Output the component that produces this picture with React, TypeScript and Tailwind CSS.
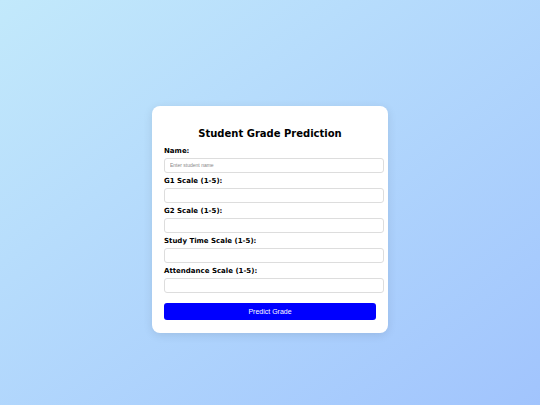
const fields = [
  { id: 'name', label: 'Name:', placeholder: 'Enter student name' },
  { id: 'g1', label: 'G1 Scale (1-5):', placeholder: '' },
  { id: 'g2', label: 'G2 Scale (1-5):', placeholder: '' },
  { id: 'study', label: 'Study Time Scale (1-5):', placeholder: '' },
  { id: 'attendance', label: 'Attendance Scale (1-5):', placeholder: '' },
]

export default function App() {
  return (
    <div className="min-h-[405px] w-full flex items-center justify-center pt-[33px] bg-gradient-to-br from-[#c2e9fb] to-[#a1c4fd] font-['DejaVu_Sans',sans-serif]">
      <div className="w-[236px] bg-white rounded-[8px] px-3 pt-[22px] pb-[12px] shadow-[0_2px_10px_rgba(0,0,0,0.1)]">
        <h2 className="text-center text-[10px] leading-[12px] font-bold text-black mb-[7px]">
          Student Grade Prediction
        </h2>

        <form onSubmit={(e) => e.preventDefault()}>
          {fields.map((field) => (
            <div key={field.id} className="mb-[4px]">
              <label htmlFor={field.id} className="block text-[7px] leading-[9px] font-bold text-black mb-[2px]">
                {field.label}
              </label>
              <input
                id={field.id}
                type="text"
                placeholder={field.placeholder}
                className="block w-[220px] h-[15px] px-[5px] border border-[#dddddd] rounded-[3px] bg-white text-[5px] font-['Liberation_Sans',sans-serif] placeholder:text-[#888888] outline-none"
              />
            </div>
          ))}

          <button
            type="submit"
            className="mt-[4px] w-full h-[17px] bg-[#0000ff] text-white rounded-[3px] text-[7px] font-['Liberation_Sans',sans-serif]"
          >
            Predict Grade
          </button>
        </form>
      </div>
    </div>
  )
}
